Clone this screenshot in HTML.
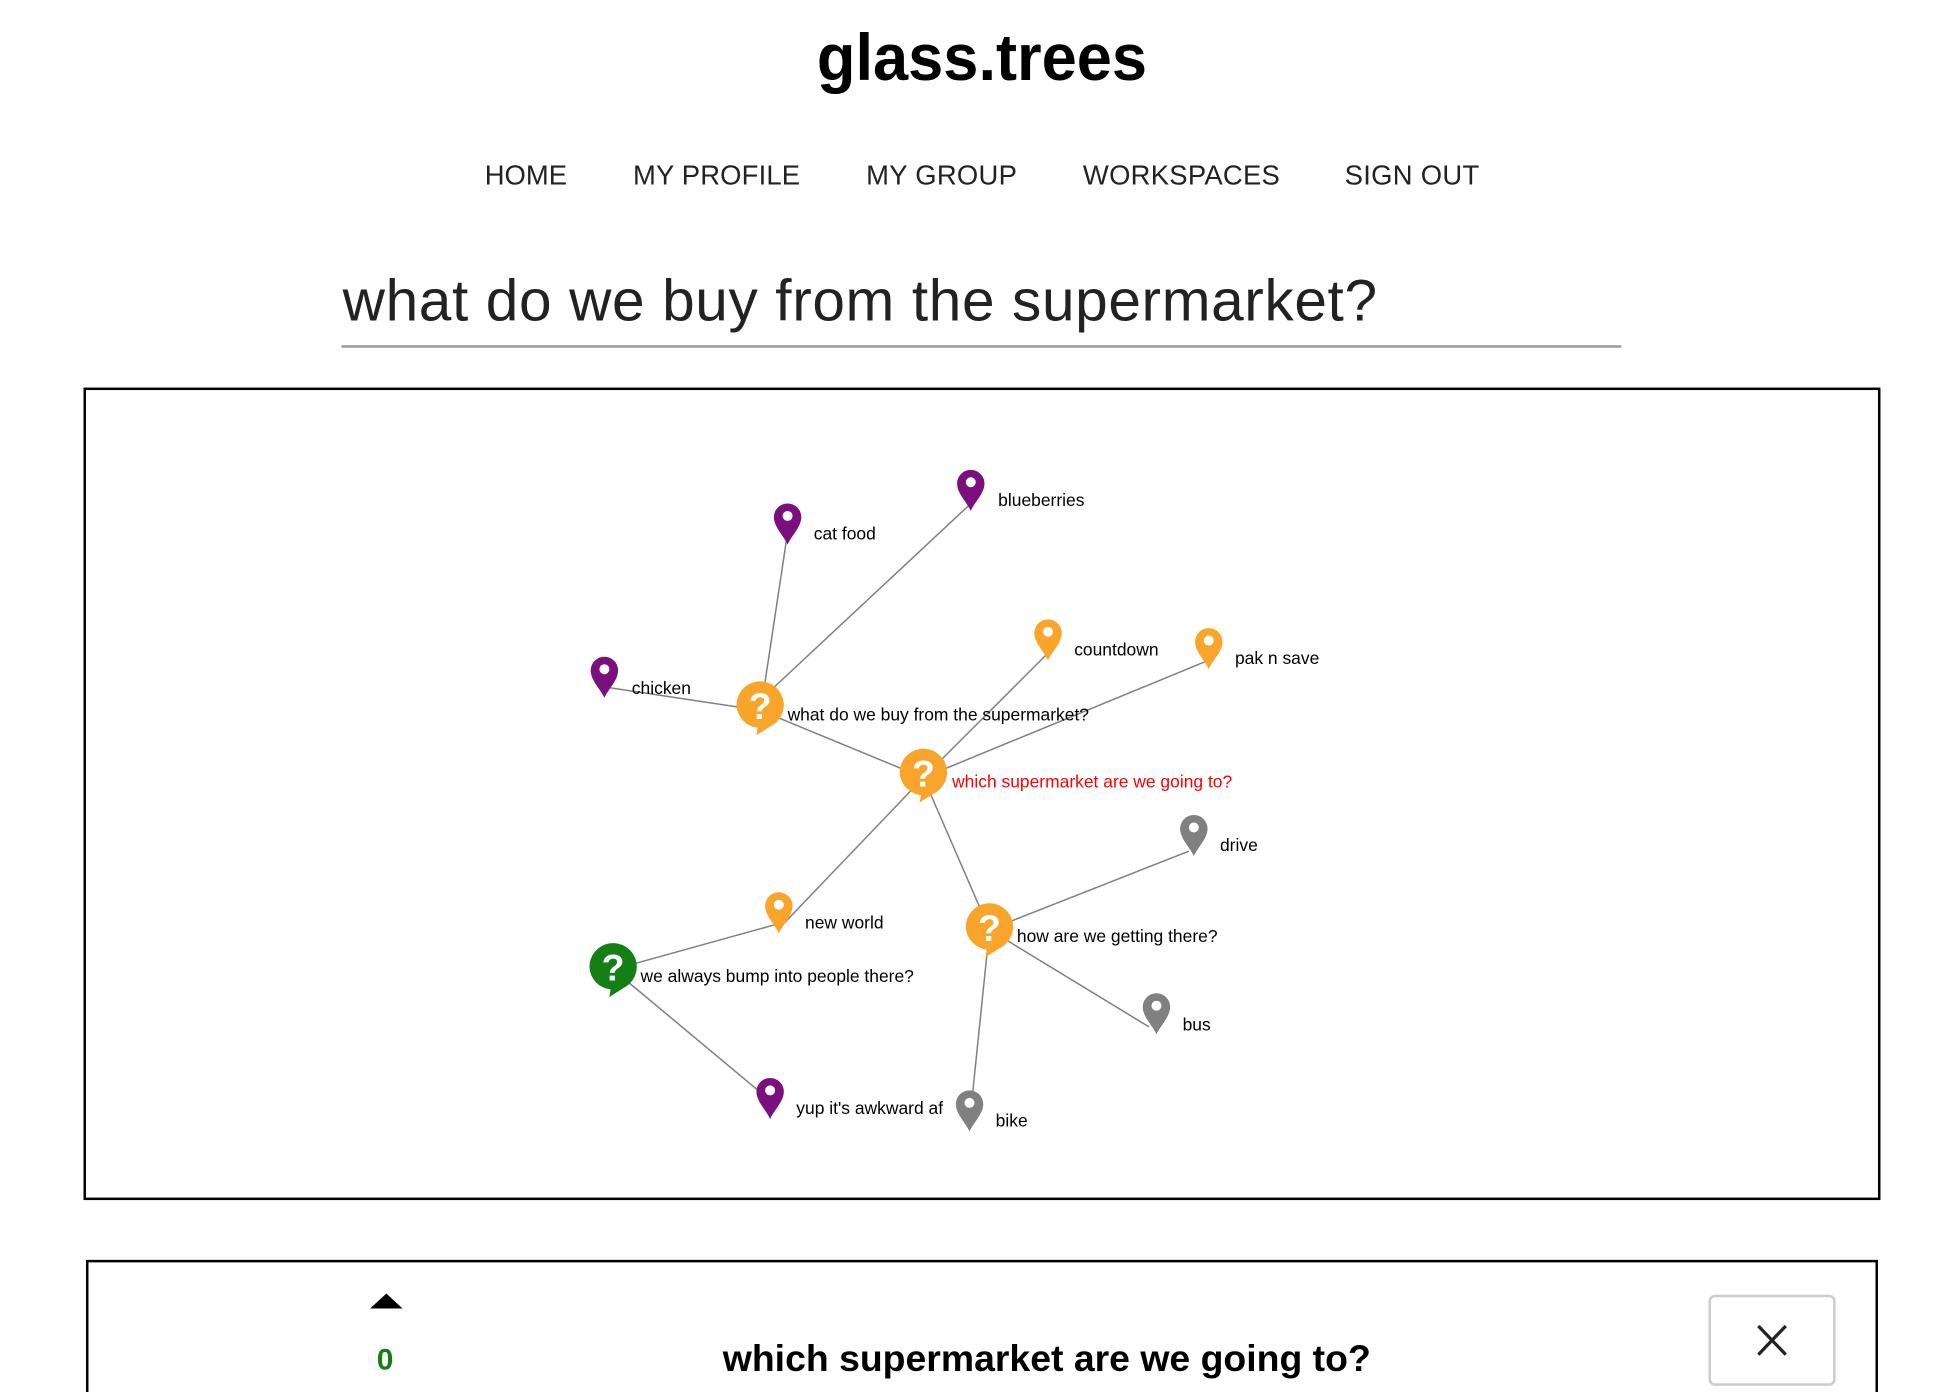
<!DOCTYPE html>
<html><head><meta charset="utf-8"><style>
html,body{margin:0;padding:0;background:#fff;overflow:hidden}
svg{display:block}
text{font-family:"Liberation Sans",Arial,sans-serif}
</style></head><body>
<svg width="1954" height="1392" viewBox="0 0 1568 1117" preserveAspectRatio="none" xmlns="http://www.w3.org/2000/svg">
<defs>
<path id="pin" d="M0,20 C-3,13 -11,6 -11,-2 A11,11 0 1 1 11,-2 C11,6 3,13 0,20 Z"/>
<path id="bub" d="M-19,0 A19,19 0 1 1 8,17 L-3,24 L-2,18 A19,19 0 0 1 -19,0 Z"/>
</defs>
<text x="788" y="64" text-anchor="middle" font-size="53" font-weight="bold" fill="#000" textLength="265" lengthAdjust="spacingAndGlyphs">glass.trees</text>
<g font-size="22" fill="#222">
<text x="389" y="148" textLength="66">HOME</text>
<text x="508" y="148" textLength="134">MY PROFILE</text>
<text x="695" y="148" textLength="121">MY GROUP</text>
<text x="869" y="148" textLength="158">WORKSPACES</text>
<text x="1079" y="148" textLength="108">SIGN OUT</text>
</g>
<text x="275" y="257" font-size="47" fill="#222" textLength="830">what do we buy from the supermarket?</text>
<rect x="274" y="277" width="1027" height="2" fill="#999"/>
<rect x="68" y="312" width="1440" height="650" fill="none" stroke="#000" stroke-width="2"/>
<g stroke="#808080" stroke-width="1.2">
<line x1="612" y1="560" x2="631" y2="434"/>
<line x1="612" y1="560" x2="777" y2="406"/>
<line x1="610" y1="570" x2="490" y2="552"/>
<line x1="610" y1="570" x2="741" y2="624"/>
<line x1="741" y1="624" x2="839" y2="526"/>
<line x1="741" y1="624" x2="967" y2="531"/>
<line x1="741" y1="624" x2="630" y2="740"/>
<line x1="741" y1="624" x2="794" y2="746"/>
<line x1="794" y1="746" x2="954" y2="683"/>
<line x1="794" y1="746" x2="922" y2="824"/>
<line x1="794" y1="746" x2="780" y2="882"/>
<line x1="492" y1="778" x2="622" y2="742"/>
<line x1="492" y1="778" x2="612" y2="878"/>
</g>
<g>
<g fill="#7B0F7E">
<use href="#pin" x="632" y="417"/><use href="#pin" x="779" y="390"/><use href="#pin" x="485" y="540"/><use href="#pin" x="618" y="878"/>
</g>
<g fill="#F9A42B">
<use href="#pin" x="841" y="510"/><use href="#pin" x="970" y="517"/><use href="#pin" x="625" y="729"/>
</g>
<g fill="#808080">
<use href="#pin" x="958" y="667"/><use href="#pin" x="928" y="810"/><use href="#pin" x="778" y="888"/>
</g>
<g fill="#fff">
<circle cx="632" cy="414" r="4"/><circle cx="779" cy="387" r="4"/><circle cx="485" cy="537" r="4"/><circle cx="618" cy="875" r="4"/>
<circle cx="841" cy="507" r="4"/><circle cx="970" cy="514" r="4"/><circle cx="625" cy="726" r="4"/>
<circle cx="958" cy="664" r="4"/><circle cx="928" cy="807" r="4"/><circle cx="778" cy="885" r="4"/>
</g>
<use href="#bub" x="610" y="566" fill="#F9A42B"/>
<use href="#bub" x="741" y="620" fill="#F9A42B"/>
<use href="#bub" x="794" y="744" fill="#F9A42B"/>
<use href="#bub" x="492" y="776" fill="#137F14"/>
<g font-size="30" font-weight="bold" fill="#fff" text-anchor="middle">
<text x="610" y="577">?</text><text x="741" y="631">?</text><text x="794" y="755">?</text><text x="492" y="787">?</text>
</g>
</g>
<g font-size="14" fill="#000">
<text x="653" y="433">cat food</text>
<text x="801" y="406">blueberries</text>
<text x="507" y="557">chicken</text>
<text x="862" y="526">countdown</text>
<text x="991" y="533">pak n save</text>
<text x="632" y="578">what do we buy from the supermarket?</text>
<text x="764" y="632" fill="#F00">which supermarket are we going to?</text>
<text x="979" y="683">drive</text>
<text x="646" y="745">new world</text>
<text x="816" y="756">how are we getting there?</text>
<text x="514" y="788">we always bump into people there?</text>
<text x="949" y="827">bus</text>
<text x="639" y="894">yup it's awkward af</text>
<text x="799" y="904">bike</text>
</g>
<path d="M70,1117 V1012 H1506 V1117" fill="none" stroke="#000" stroke-width="2"/>
<polygon points="297,1050 323,1050 310,1038" fill="#000"/>
<text x="309" y="1099" text-anchor="middle" font-size="24" font-weight="bold" fill="#137F14">0</text>
<text x="840" y="1100" text-anchor="middle" font-size="30" font-weight="bold" fill="#000" textLength="520" lengthAdjust="spacingAndGlyphs">which supermarket are we going to?</text>
<rect x="1372" y="1040" width="100" height="71" rx="4" fill="#fff" stroke="#ccc" stroke-width="2"/>
<path d="M1411,1064 L1433,1087 M1433,1064 L1411,1087" stroke="#222" stroke-width="2.6"/>
</svg>
</body></html>
